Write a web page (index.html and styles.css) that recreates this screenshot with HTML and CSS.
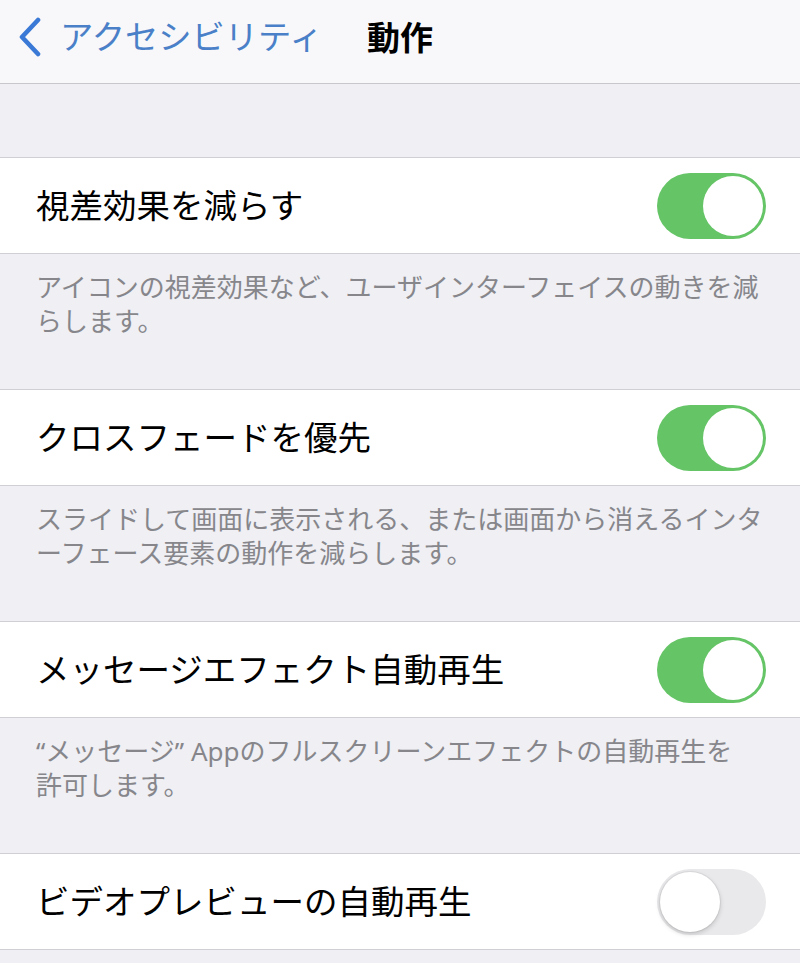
FILE: index.html
```html
<!DOCTYPE html>
<html lang="ja">
<head>
<meta charset="utf-8">
<link rel="stylesheet" href="styles.css">
</head>
<body>
<header class="nav">
  <div class="back">
    <svg class="chev" viewBox="0 0 26 40" width="26" height="40"><polyline points="21,3 5,20 21,37" fill="none" stroke="#3a79d6" stroke-width="4.6" stroke-linecap="round" stroke-linejoin="round"/></svg>
    <span class="back-text">アクセシビリティ</span>
  </div>
  <h1 class="title">動作</h1>
  <div></div>
</header>
<main class="content">
  <div class="spacer"></div>
  <section class="group">
    <div class="row"><span class="label">視差効果を減らす</span><span class="switch on"></span></div>
  </section>
  <p class="footer">アイコンの視差効果など、ユーザインターフェイスの動きを減らします。</p>
  <section class="group">
    <div class="row"><span class="label">クロスフェードを優先</span><span class="switch on"></span></div>
  </section>
  <p class="footer">スライドして画面に表示される、または画面から消えるインターフェース要素の動作を減らします。</p>
  <section class="group">
    <div class="row"><span class="label">メッセージエフェクト自動再生</span><span class="switch on"></span></div>
  </section>
  <p class="footer">“メッセージ” Appのフルスクリーンエフェクトの自動再生を<span class="keep">許可します。</span></p>
  <section class="group">
    <div class="row"><span class="label">ビデオプレビューの自動再生</span><span class="switch off"></span></div>
  </section>
</main>
</body>
</html>
```
FILE: styles.css
```css
html, body {
  margin: 0;
  padding: 0;
}
body {
  width: 800px;
  height: 963px;
  overflow: hidden;
  background: #efeff4;
  font-family: "Noto Sans", "Noto Sans CJK JP", sans-serif;
}
.nav {
  height: 74px;
  padding-bottom: 9px;
  background: #f8f8fa;
  border-bottom: 1px solid #c8c8cc;
  display: grid;
  grid-template-columns: 1fr auto 1fr;
  align-items: center;
}
.back {
  display: flex;
  align-items: center;
  padding-left: 17px;
}
.chev {
  display: block;
}
.back-text {
  margin-left: 17px;
  font-size: 33.3px;
  color: #4a80c8;
  line-height: 1;
}
.title {
  margin: 0;
  font-size: 33px;
  font-weight: 700;
  color: #000;
  line-height: 1;
}
.spacer {
  height: 73px;
}
.group {
  background: #fff;
  border-top: 1px solid #d0d0d4;
  border-bottom: 1px solid #d0d0d4;
}
.row {
  height: 95px;
  display: flex;
  align-items: center;
  justify-content: space-between;
  padding: 0 34px 0 36px;
}
.label {
  font-size: 33.5px;
  color: #000;
  line-height: 1;
}
.switch {
  position: relative;
  width: 109px;
  height: 66px;
  border-radius: 33px;
  box-sizing: border-box;
  flex: none;
}
.switch::after {
  content: "";
  position: absolute;
  top: 3px;
  width: 60px;
  height: 60px;
  border-radius: 50%;
  background: #fff;
}
.switch.on {
  background: #64c466;
}
.switch.on::after {
  right: 3px;
}
.switch.off {
  background: #e9e9eb;
}
.switch.off::after {
  left: 3px;
  box-shadow: 0 2px 5px rgba(0,0,0,0.18), 0 0 0 1px rgba(0,0,0,0.05);
}
.footer {
  margin: 0;
  height: 135px;
  box-sizing: border-box;
  padding: 16px 34px 0 36px;
  font-size: 26px;
  line-height: 34px;
  color: #86868b;
}
.keep {
  white-space: nowrap;
}
```
